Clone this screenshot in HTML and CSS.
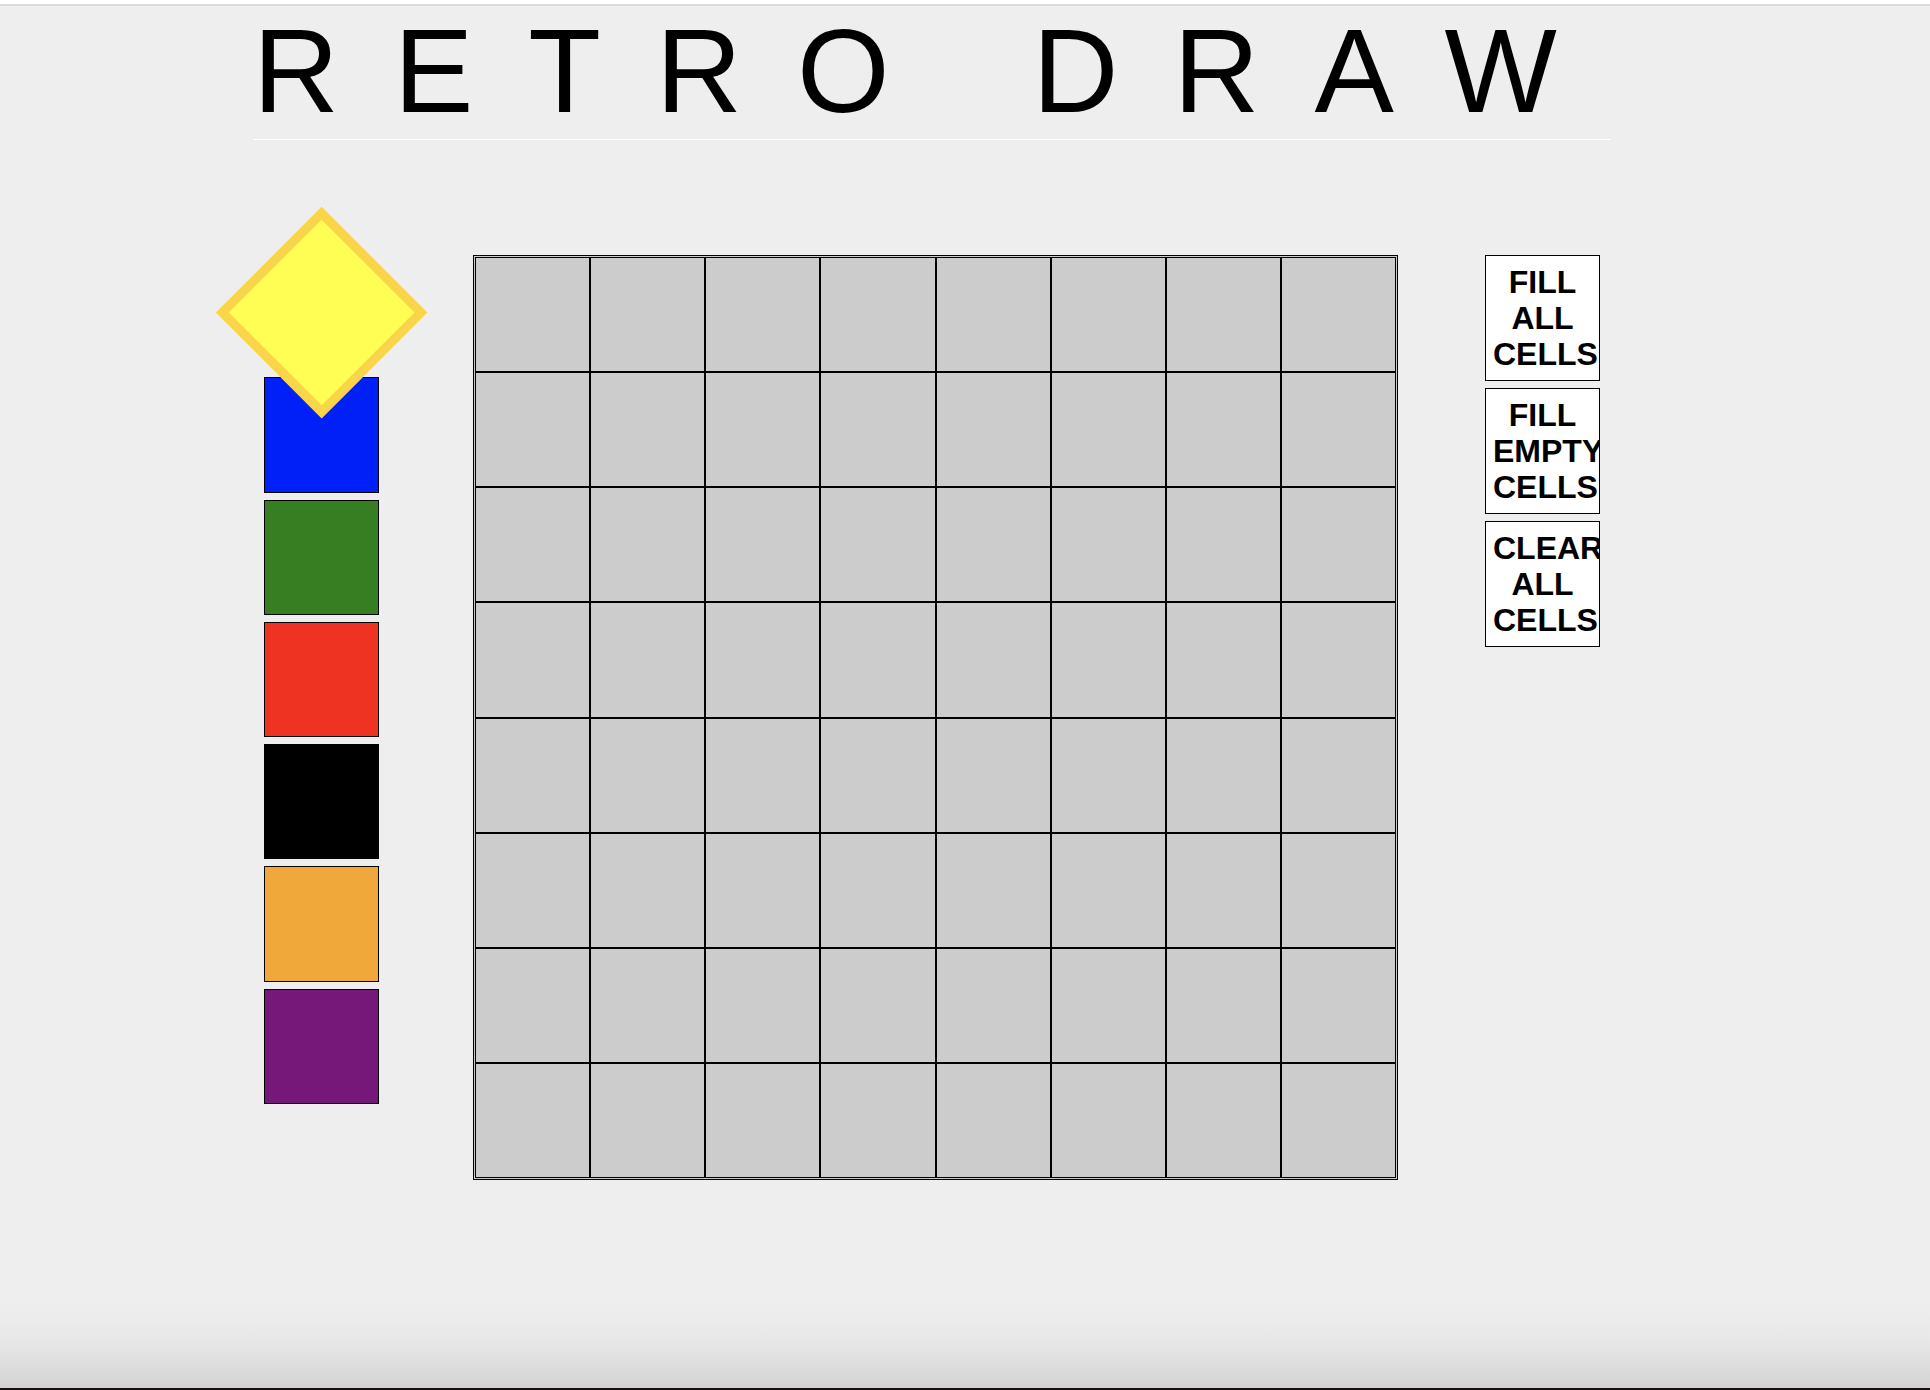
FILE: index.html
```html
<!DOCTYPE html>
<html lang="en">
<head>
<meta charset="utf-8">
<meta name="viewport" content="width=device-width, initial-scale=1">
<title>Retro Draw</title>
<link rel="stylesheet" href="styles.css">
</head>
<body>
<div class="page">
  <header class="header"><h1 class="title">RETRO DRAW</h1></header>
  <main class="workspace">
    <div class="palette" role="radiogroup" aria-label="Brush color">
      <input class="swatch yellow" type="radio" name="color" aria-label="Yellow" checked>
      <input class="swatch blue" type="radio" name="color" aria-label="Blue">
      <input class="swatch green" type="radio" name="color" aria-label="Green">
      <input class="swatch red" type="radio" name="color" aria-label="Red">
      <input class="swatch black" type="radio" name="color" aria-label="Black">
      <input class="swatch orange" type="radio" name="color" aria-label="Orange">
      <input class="swatch purple" type="radio" name="color" aria-label="Purple">
    </div>
    <div class="board">
      <div class="cell"></div><div class="cell"></div><div class="cell"></div><div class="cell"></div><div class="cell"></div><div class="cell"></div><div class="cell"></div><div class="cell"></div>
      <div class="cell"></div><div class="cell"></div><div class="cell"></div><div class="cell"></div><div class="cell"></div><div class="cell"></div><div class="cell"></div><div class="cell"></div>
      <div class="cell"></div><div class="cell"></div><div class="cell"></div><div class="cell"></div><div class="cell"></div><div class="cell"></div><div class="cell"></div><div class="cell"></div>
      <div class="cell"></div><div class="cell"></div><div class="cell"></div><div class="cell"></div><div class="cell"></div><div class="cell"></div><div class="cell"></div><div class="cell"></div>
      <div class="cell"></div><div class="cell"></div><div class="cell"></div><div class="cell"></div><div class="cell"></div><div class="cell"></div><div class="cell"></div><div class="cell"></div>
      <div class="cell"></div><div class="cell"></div><div class="cell"></div><div class="cell"></div><div class="cell"></div><div class="cell"></div><div class="cell"></div><div class="cell"></div>
      <div class="cell"></div><div class="cell"></div><div class="cell"></div><div class="cell"></div><div class="cell"></div><div class="cell"></div><div class="cell"></div><div class="cell"></div>
      <div class="cell"></div><div class="cell"></div><div class="cell"></div><div class="cell"></div><div class="cell"></div><div class="cell"></div><div class="cell"></div><div class="cell"></div>
    </div>
    <div class="actions">
      <button class="action" type="button">FILL ALL CELLS</button>
      <button class="action" type="button">FILL EMPTY CELLS</button>
      <button class="action" type="button">CLEAR ALL CELLS</button>
    </div>
  </main>
</div>
</body>
</html>
```
FILE: styles.css
```css
* {
  box-sizing: border-box;
}

body {
  margin: 0;
  background: #eee;
  color: #000;
  font-family: "Liberation Sans", Arial, Helvetica, sans-serif;
}

.page {
  min-height: 100vh;
  padding: 0 319px 80px 253px;
  border-bottom: 2px solid #14100f;
  background:
    linear-gradient(#fff 4px, #dcdcdc 4px, #dcdcdc 6px, transparent 6px),
    linear-gradient(to top, #d3d3d3, #dedede 25px, #e8e8e8 48px, #eee 85px);
}

.header {
  padding: 6px 0 3px;
  border-bottom: 1px solid #fff;
}

.title {
  margin: 0;
  font-size: 119px;
  font-weight: 400;
  line-height: 130px;
  letter-spacing: 55px;
  white-space: nowrap;
}

.workspace {
  display: flex;
  align-items: flex-start;
  margin-top: 115px;
  padding: 0 11px;
}

.palette {
  flex: none;
  display: grid;
  grid-template-rows: repeat(7, 1fr);
  gap: 7px;
  width: 115px;
  min-height: 849px;
}

.swatch {
  appearance: none;
  width: 100%;
  height: 100%;
  margin: 0;
  border: 1px solid #000;
  border-radius: 0;
  cursor: pointer;
}

.swatch:checked {
  z-index: 1;
  border: 7px solid #f9d649;
  transform: rotate(45deg) scale(1.3);
}

.yellow { background: #fffe54; }
.blue { background: #0020f7; }
.green { background: #377e22; }
.red { background: #ee3323; }
.black { background: #000; }
.orange { background: #f1a83b; }
.purple { background: #75187a; }

.board {
  flex: 1;
  display: grid;
  grid-template-columns: repeat(8, 1fr);
  grid-template-rows: repeat(8, 1fr);
  aspect-ratio: 1;
  margin: 0 87px 0 94px;
  padding: 1px;
  border: 1px solid #000;
  background: #ccc;
}

.cell {
  border: 1px solid #000;
  background: #ccc;
}

.actions {
  flex: none;
  display: flex;
  flex-direction: column;
  gap: 7px;
  width: 115px;
}

.action {
  padding: 8px 7px;
  border: 1px solid #000;
  border-radius: 0;
  background: #fff;
  color: #000;
  font-family: inherit;
  font-size: 32px;
  font-weight: 700;
  line-height: 36px;
  text-align: center;
  clip-path: inset(0);
  cursor: pointer;
}
```
